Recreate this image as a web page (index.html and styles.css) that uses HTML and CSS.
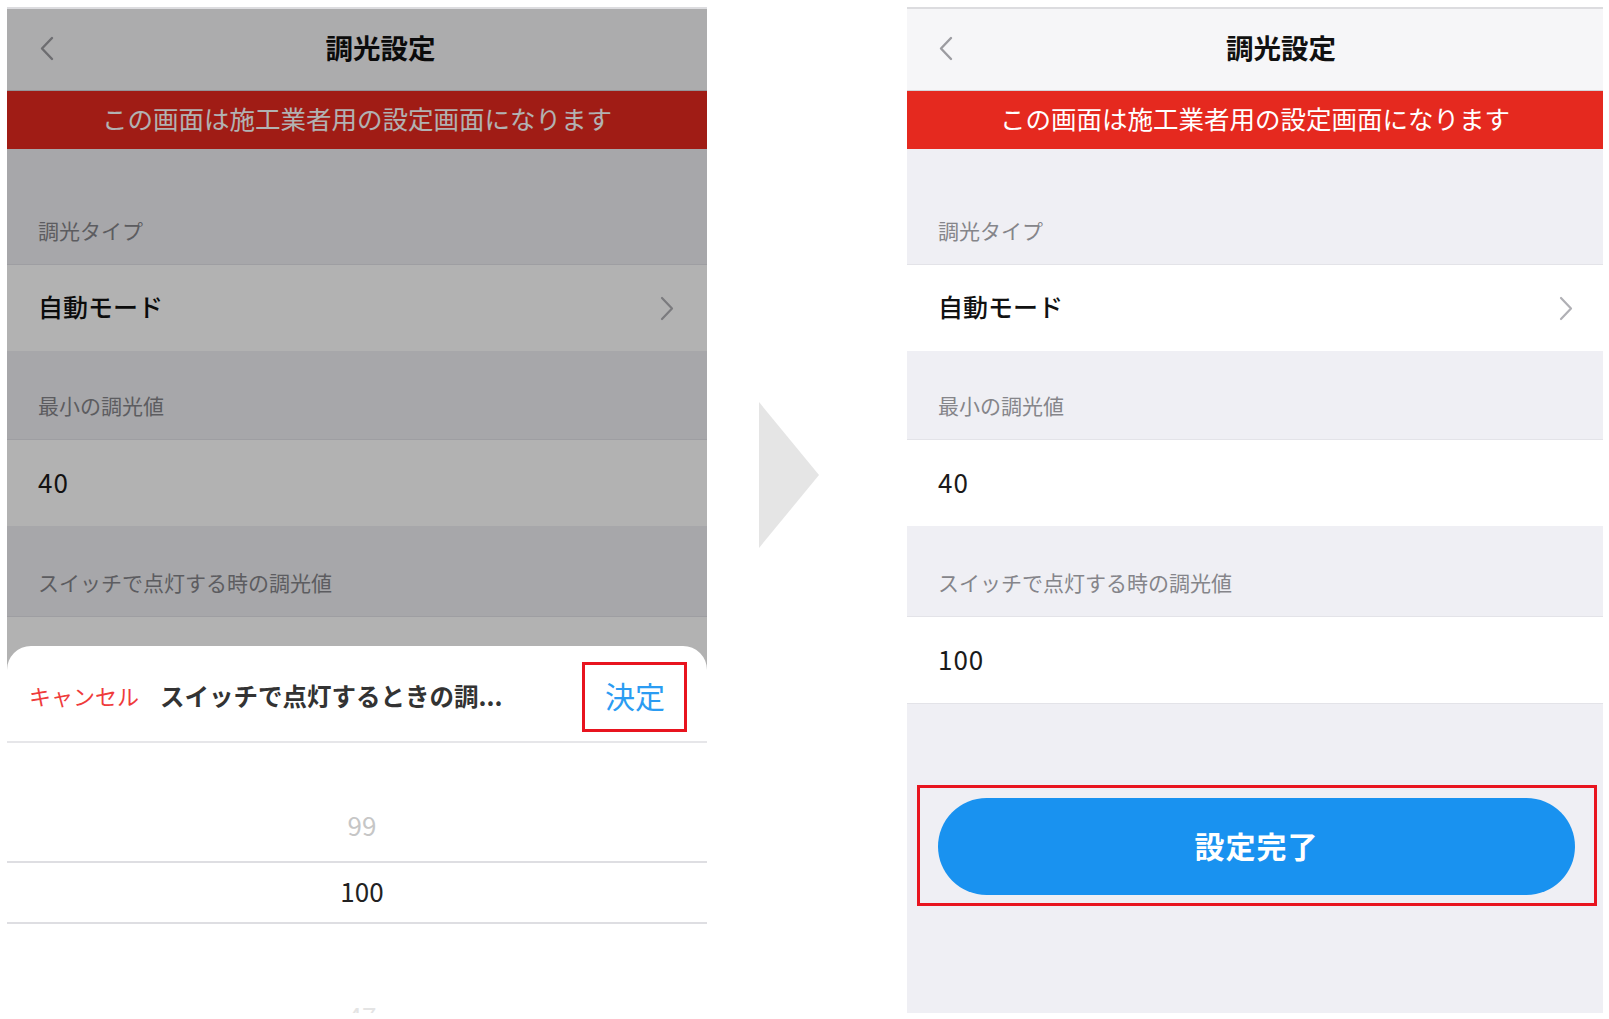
FILE: index.html
```html
<!DOCTYPE html>
<html lang="ja">
<head>
<meta charset="utf-8">
<title>調光設定</title>
<link rel="stylesheet" href="styles.css">
</head>
<body>
<div class="stage">
  <section class="phone phone-left">
    <header class="nav">
      <svg class="back" viewBox="0 0 14 25"><path d="M12 2 L2 12.5 L12 23"/></svg>
      <h1 class="title">調光設定</h1>
    </header>
    <div class="banner">この画面は施工業者用の設定画面になります</div>
    <div class="group g1">調光タイプ</div>
    <div class="cell"><span class="cell-text">自動モード</span><svg class="chev" viewBox="0 0 14 25"><path d="M2 2 L12 12.5 L2 23"/></svg></div>
    <div class="group g2">最小の調光値</div>
    <div class="cell"><span class="cell-num">40</span></div>
    <div class="group g3">スイッチで点灯する時の調光値</div>
    <div class="cell"><span class="cell-num">100</span></div>
    <div class="footer"></div>

    <div class="dim"></div>
    <div class="sheet">
      <div class="sheet-head">
        <span class="cancel">キャンセル</span>
        <span class="sheet-title">スイッチで点灯するときの調...</span>
        <button class="confirm">決定</button>
      </div>
      <div class="picker">
        <div class="opt opt-prev">99</div>
        <div class="opt opt-current">100</div>
        <div class="opt opt-next">47</div>
      </div>
    </div>
  </section>

  <div class="between">
    <svg class="arrow" viewBox="0 0 60 146"><polygon points="0,0 60,73 0,146"/></svg>
  </div>

  <section class="phone phone-right">
    <header class="nav">
      <svg class="back" viewBox="0 0 14 25"><path d="M12 2 L2 12.5 L12 23"/></svg>
      <h1 class="title">調光設定</h1>
    </header>
    <div class="banner">この画面は施工業者用の設定画面になります</div>
    <div class="group g1">調光タイプ</div>
    <div class="cell"><span class="cell-text">自動モード</span><svg class="chev" viewBox="0 0 14 25"><path d="M2 2 L12 12.5 L2 23"/></svg></div>
    <div class="group g2">最小の調光値</div>
    <div class="cell"><span class="cell-num">40</span></div>
    <div class="group g3">スイッチで点灯する時の調光値</div>
    <div class="cell"><span class="cell-num">100</span></div>
    <div class="footer">
      <div class="highlight">
        <button class="done">設定完了</button>
      </div>
    </div>
  </section>
</div>
</body>
</html>
```
FILE: styles.css
```css
* { box-sizing: border-box; margin: 0; padding: 0; }

body {
  background: #ffffff;
  font-family: "Noto Sans CJK JP", "Noto Sans", sans-serif;
}

.stage {
  display: flex;
  align-items: flex-start;
  padding: 7px 0 0 7px;
}

.phone {
  position: relative;
  height: 1006px;
  border-top: 2px solid #dcdcdf;
  overflow: hidden;
  background: #efeff4;
  display: flex;
  flex-direction: column;
}
.phone-left { width: 700px; }
.phone-right { width: 696px; }

.nav {
  height: 82px;
  flex: none;
  display: flex;
  align-items: center;
  padding: 0 0 2px 33px;
  background: #f6f6f8;
  border-bottom: 1px solid #d4d4d8;
}
.phone-right .nav { padding-left: 32px; }

.back { width: 14px; height: 25px; flex: none; }
.back path {
  fill: none;
  stroke: #9c9ca1;
  stroke-width: 2.4;
  stroke-linecap: round;
  stroke-linejoin: round;
}

.title {
  flex: 1;
  text-align: center;
  font-size: 27.5px;
  font-weight: 700;
  color: #111;
  line-height: 40px;
  padding-bottom: 4px;
}
.phone-right .title { padding-left: 6px; }

.banner {
  flex: none;
  height: 58px;
  line-height: 54px;
  padding-bottom: 4px;
  background: #e5291f;
  color: #fff;
  font-size: 25.5px;
  text-align: center;
}

.group {
  flex: none;
  display: flex;
  align-items: flex-end;
  padding: 0 31px 19px;
  font-size: 21px;
  line-height: 30px;
  color: #85858a;
}
.g1 { height: 115px; }
.g2 { height: 88px; }
.g3 { height: 90px; }

.cell {
  flex: none;
  height: 87px;
  background: #fff;
  border-top: 1px solid #e3e3e8;
  display: flex;
  align-items: center;
  justify-content: space-between;
  padding: 0 33px 4px 31px;
}
.phone-right .cell { padding-right: 30px; }
.cell-text {
  font-size: 25px;
  font-weight: 500;
  color: #111;
}
.cell-num {
  font-size: 26px;
  color: #1a1a1a;
  letter-spacing: 1px;
}
.chev { width: 14px; height: 25px; flex: none; margin-top: 4px; }
.chev path {
  fill: none;
  stroke: #b0b0b5;
  stroke-width: 2.2;
  stroke-linecap: round;
  stroke-linejoin: round;
}

.footer {
  flex: 1;
  background: #efeff4;
  border-top: 1px solid #e3e3e8;
  padding: 81px 6px 0 10px;
}

.highlight {
  border: 3px solid #e8141f;
  padding: 10px 19px 8px 18px;
}
.done {
  display: block;
  width: 100%;
  height: 97px;
  border: none;
  border-radius: 49px;
  background: #1992f0;
  color: #fff;
  font-family: inherit;
  font-size: 30px;
  font-weight: 700;
  letter-spacing: 1px;
  padding-bottom: 4px;
}

/* dimmed screen + bottom sheet */
.dim {
  position: absolute;
  inset: 0;
  background: rgba(0, 0, 0, 0.3);
  z-index: 1;
}

.sheet {
  position: absolute;
  left: 0;
  right: 0;
  top: 637px;
  bottom: 0;
  z-index: 2;
  background: #fff;
  border-radius: 24px 24px 0 0;
  overflow: hidden;
}

.sheet-head {
  height: 97px;
  display: flex;
  align-items: center;
  padding: 7px 20px 0 22px;
  border-bottom: 2px solid #e6e6e9;
}
.cancel {
  font-size: 22px;
  color: #ef3b3b;
  padding-bottom: 4px;
}
.sheet-title {
  margin-left: 21px;
  font-size: 24.5px;
  font-weight: 700;
  color: #333;
  white-space: nowrap;
  padding-bottom: 4px;
}
.confirm {
  margin-left: auto;
  height: 70px;
  padding: 0 19px 5px 20px;
  border: 3px solid #e8141f;
  background: none;
  font-family: inherit;
  font-size: 30px;
  color: #2b9cf2;
  display: flex;
  align-items: center;
}

.picker {
  display: flex;
  flex-direction: column;
}
.opt {
  text-align: center;
  font-size: 26px;
  padding-left: 10px;
}
.opt-prev {
  margin-top: 46px;
  height: 72px;
  line-height: 72px;
  color: #c6c6c6;
}
.opt-current {
  height: 63px;
  line-height: 55px;
  border-top: 2px solid #dedee2;
  border-bottom: 2px solid #dedee2;
  color: #222;
}
.opt-next {
  margin-top: 72px;
  height: 40px;
  line-height: 40px;
  color: #e4e4e4;
}

.between {
  width: 200px;
  flex: none;
  padding: 395px 0 0 52px;
}
.arrow { display: block; width: 60px; height: 146px; }
.arrow polygon { fill: #e5e5e5; }
```
